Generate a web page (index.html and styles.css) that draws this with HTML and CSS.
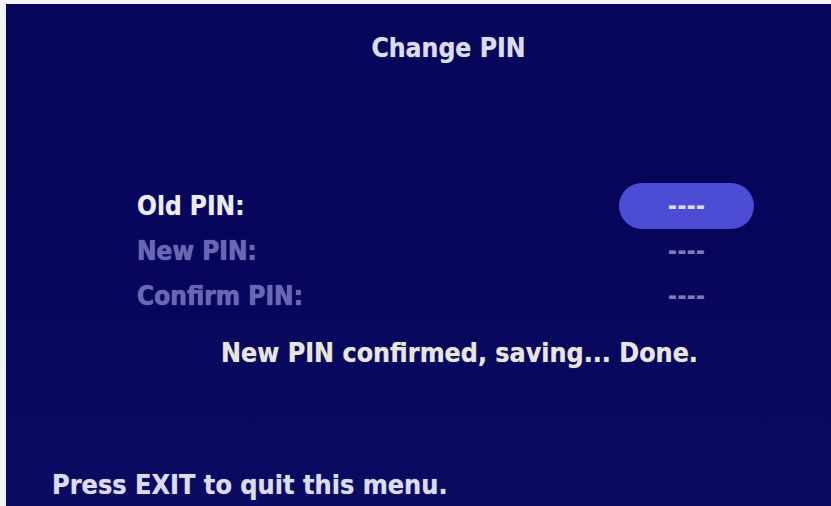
FILE: index.html
```html
<!DOCTYPE html>
<html lang="en">
<head>
<meta charset="utf-8">
<title>Change PIN</title>
<link rel="stylesheet" href="styles.css">
</head>
<body>
<div class="screen">
  <div class="title">Change PIN</div>
  <div class="rows">
    <div class="row active">
      <span class="label">Old PIN:</span>
      <span class="value pill">----</span>
    </div>
    <div class="row">
      <span class="label">New PIN:</span>
      <span class="value">----</span>
    </div>
    <div class="row">
      <span class="label">Confirm PIN:</span>
      <span class="value">----</span>
    </div>
  </div>
  <div class="message">New PIN confirmed, saving... Done.</div>
  <div class="footer">Press EXIT to quit this menu.</div>
</div>
</body>
</html>
```
FILE: styles.css
```css
html, body {
  margin: 0;
  padding: 0;
  background: #f4f4f8;
}
body {
  width: 831px;
  height: 506px;
  overflow: hidden;
}
.screen {
  margin: 4px 0 0 6px;
  width: 825px;
  height: 502px;
  box-sizing: border-box;
  padding-top: 29px;
  display: flex;
  flex-direction: column;
  background: linear-gradient(180deg, #06065a 0%, #07065c 55%, #0b0b62 100%);
  font-family: "DejaVu Sans Condensed", "DejaVu Sans", sans-serif;
  font-stretch: condensed;
  font-weight: bold;
  font-size: 26px;
  line-height: 30px;
  color: #e2e2f2;
  text-shadow: 0 0 1px rgba(220, 220, 255, 0.6);
}
.title {
  text-align: center;
  padding-left: 60px;
  font-size: 26.3px;
  color: #dcdcf0;
}
.rows {
  margin-top: 120px;
  padding: 0 77px 0 131px;
  display: flex;
  flex-direction: column;
}
.row {
  height: 45px;
  display: flex;
  align-items: center;
  justify-content: space-between;
}
.label {
  color: #6767b6;
}
.row.active .label {
  color: #ececf6;
}
.value {
  width: 135px;
  height: 46px;
  display: flex;
  align-items: center;
  justify-content: center;
  font-size: 25px;
  color: #7c7cbc;
  text-shadow: none;
}
.pill {
  background: #4c4cd4;
  border-radius: 23px;
  color: #dcdcf6;
}
.message {
  margin-top: 20px;
  padding-left: 215px;
  font-size: 26.6px;
  color: #e6e6dc;
}
.footer {
  margin-top: auto;
  margin-bottom: 6px;
  padding-left: 46px;
  font-size: 26.8px;
  color: #dcdcf0;
}
```
